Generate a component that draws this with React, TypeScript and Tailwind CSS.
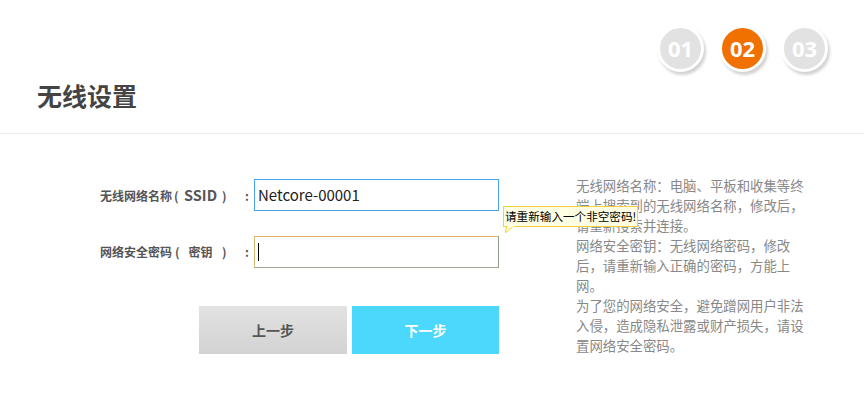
import React from "react";

const font = { fontFamily: '"Noto Sans CJK SC", "Noto Sans", sans-serif' };

function Step({ n, active }: { n: string; active?: boolean }) {
  return (
    <div
      className={
        "w-[47px] h-[47px] rounded-full border-[3px] border-white flex items-center justify-center text-white font-bold text-[22px] shadow-[2px_3px_3px_rgba(0,0,0,0.18)] " +
        (active ? "bg-[#f07000]" : "bg-[#e2e2e2]")
      }
      style={{ fontFamily: '"Open Sans", "Liberation Sans", sans-serif' }}
    >
      {n}
    </div>
  );
}

export default function App() {
  const help = [
    "无线网络名称：电脑、平板和收集等终",
    "端上搜索到的无线网络名称，修改后，",
    "请重新搜索并连接。",
    "网络安全密钥：无线网络密码，修改",
    "后，请重新输入正确的密码，方能上",
    "网。",
    "为了您的网络安全，避免蹭网用户非法",
    "入侵，造成隐私泄露或财产损失，请设",
    "置网络安全密码。",
  ];
  return (
    <div lang="zh-CN" className="w-[864px] h-[404px] bg-white overflow-hidden" style={font}>
      <div className="h-[134px] border-b border-[#efefef] flex flex-col">
        <div className="flex justify-end gap-[15px] pr-[36px] pt-[25px]">
          <Step n="01" />
          <Step n="02" active />
          <Step n="03" />
        </div>
        <div className="pl-[37px] mt-[5px] text-[25px] leading-[36px] font-bold text-[#444]">
          无线设置
        </div>
      </div>
      <div className="flex pt-[41px]">
        <div className="w-[500px] shrink-0 pt-[4px] flex flex-col">
          <div className="flex items-center relative">
            <div className="w-[254px] flex justify-end items-baseline font-bold text-[#555] whitespace-nowrap text-[12px]">
              <span>无线网络名称</span>
              <span className="w-[12px] pl-[2px]">(</span>
              <span className="text-[14.5px]">SSID</span>
              <span className="w-[24px] pl-[5px]">)</span>
              <span className="w-[13px] pl-[4px]">:</span>
            </div>
            <div className="w-[245px] h-[32px] border border-[#4aa3f0] flex items-center pl-[3px] text-[15px] text-[#222]">
              Netcore-00001
            </div>
            <div className="absolute left-[503px] top-[27px] z-10">
              <div className="h-[21px] px-[1px] border border-[#f2d23c] bg-[#ffffe4] flex items-center text-[11.6px] text-black whitespace-nowrap leading-none">
                请重新输入一个非空密码!
              </div>
              <svg width="10" height="7" className="absolute left-[2px] top-[20px]" viewBox="0 0 10 7">
                <polygon points="0,7 2,0 9,0" fill="#ffffe4" stroke="#f2d23c" strokeWidth="1" />
                <rect x="2" y="0" width="7" height="1.2" fill="#ffffe4" />
              </svg>
            </div>
          </div>
          <div className="flex items-center mt-[25px]">
            <div className="w-[254px] flex justify-end items-baseline font-bold text-[#555] whitespace-nowrap text-[12px]">
              <span>网络安全密码</span>
              <span className="w-[12px] pl-[3px]">(</span>
              <span className="w-[33px] text-center">密钥</span>
              <span className="w-[24px] pl-[5px]">)</span>
              <span className="w-[13px] pl-[4px]">:</span>
            </div>
            <div className="w-[245px] h-[32px] border border-t-[#dcb866] border-l-[#d6b86a] border-r-[#8e9e8c] border-b-[#9ea88a] flex items-center pl-[3px]">
              <div className="w-[1px] h-[18px] bg-black" />
            </div>
          </div>
          <div className="flex gap-[5px] mt-[38px] ml-[199px]">
            <div className="w-[148px] h-[48px] bg-gradient-to-b from-[#e2e2e2] to-[#d3d3d3] flex items-center justify-center text-[14px] font-bold text-[#555]">
              上一步
            </div>
            <div className="w-[147px] h-[48px] bg-[#4cd8fd] flex items-center justify-center text-[14px] font-bold text-white">
              下一步
            </div>
          </div>
        </div>
        <div className="ml-[76px] text-[13.4px] leading-[20px] text-[#888] flex flex-col items-start">
          {help.map((l, i) => (
            <div key={i} className="whitespace-nowrap">
              {l}
            </div>
          ))}
        </div>
      </div>
    </div>
  );
}
